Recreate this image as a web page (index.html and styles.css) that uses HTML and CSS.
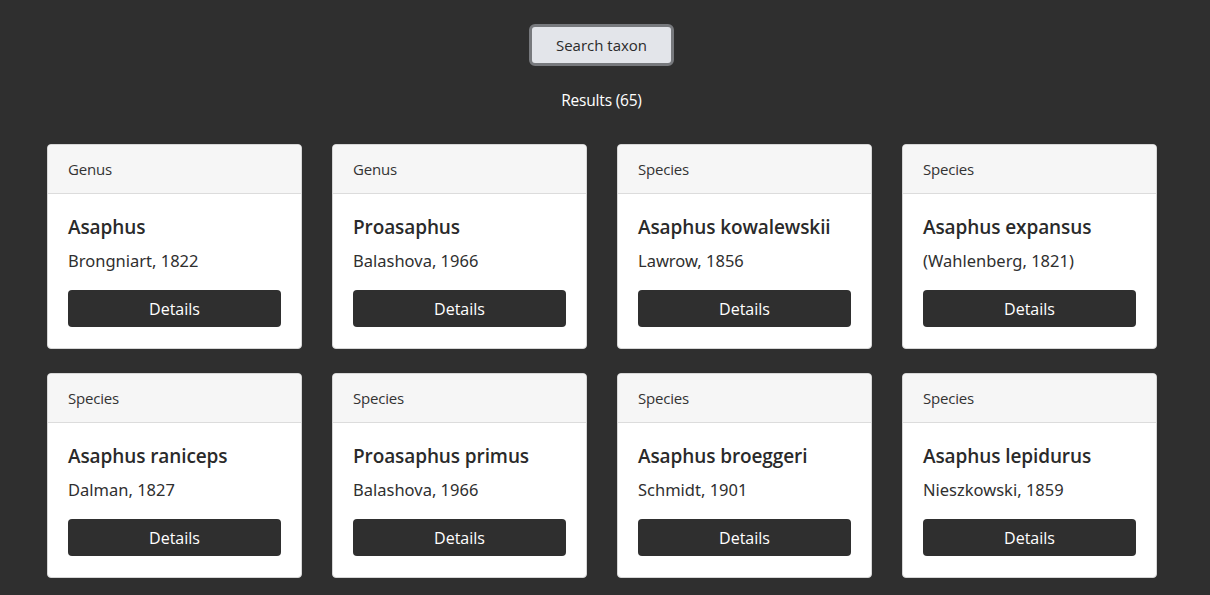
FILE: index.html
```html
<!DOCTYPE html>
<html lang="en">
<head>
<meta charset="utf-8">
<title>Search taxon</title>
<link rel="stylesheet" href="styles.css">
</head>
<body>
<main class="page">
  <div class="search-row">
    <button class="search-btn" type="button">Search taxon</button>
  </div>
  <p class="results">Results (65)</p>
  <div class="grid">
    <div class="card"><div class="card-header">Genus</div><div class="card-body"><h5 class="title">Asaphus</h5><p class="author">Brongniart, 1822</p><button class="details" type="button">Details</button></div></div>
    <div class="card"><div class="card-header">Genus</div><div class="card-body"><h5 class="title">Proasaphus</h5><p class="author">Balashova, 1966</p><button class="details" type="button">Details</button></div></div>
    <div class="card"><div class="card-header">Species</div><div class="card-body"><h5 class="title">Asaphus kowalewskii</h5><p class="author">Lawrow, 1856</p><button class="details" type="button">Details</button></div></div>
    <div class="card"><div class="card-header">Species</div><div class="card-body"><h5 class="title">Asaphus expansus</h5><p class="author">(Wahlenberg, 1821)</p><button class="details" type="button">Details</button></div></div>
    <div class="card"><div class="card-header">Species</div><div class="card-body"><h5 class="title">Asaphus raniceps</h5><p class="author">Dalman, 1827</p><button class="details" type="button">Details</button></div></div>
    <div class="card"><div class="card-header">Species</div><div class="card-body"><h5 class="title">Proasaphus primus</h5><p class="author">Balashova, 1966</p><button class="details" type="button">Details</button></div></div>
    <div class="card"><div class="card-header">Species</div><div class="card-body"><h5 class="title">Asaphus broeggeri</h5><p class="author">Schmidt, 1901</p><button class="details" type="button">Details</button></div></div>
    <div class="card"><div class="card-header">Species</div><div class="card-body"><h5 class="title">Asaphus lepidurus</h5><p class="author">Nieszkowski, 1859</p><button class="details" type="button">Details</button></div></div>
  </div>
</main>
</body>
</html>
```

FILE: styles.css
```css
* { box-sizing: border-box; }
html, body {
  margin: 0;
  background: #2f2f2f;
}
body {
  font-family: "Open Sans", "Noto Sans", sans-serif;
  color: #212529;
  overflow: hidden;
}
.page {
  width: 1203px;
  padding: 24px 47px 0 47px;
}
.search-row {
  display: flex;
  justify-content: center;
}
.search-btn {
  width: 145px;
  height: 42px;
  background: #e3e5ea;
  border: 3px solid #77797d;
  border-radius: 6px;
  font-family: "Open Sans", "Noto Sans", sans-serif;
  font-size: 15px;
  color: #2b2b2b;
  padding: 0;
}
.results {
  margin: 24px 0 0 0;
  text-align: center;
  color: #ffffff;
  font-size: 15.5px;
  line-height: 20px;
  letter-spacing: -0.2px;
}
.grid {
  margin-top: 34px;
  display: grid;
  grid-template-columns: repeat(4, 255px);
  column-gap: 30px;
  row-gap: 24px;
}
.card {
  background: #ffffff;
  border: 1px solid #d6d6d6;
  border-radius: 4px;
  height: 205px;
  overflow: hidden;
}
.card-header {
  height: 49px;
  background: #f6f6f6;
  border-bottom: 1px solid #dcdcdc;
  padding: 0 20px;
  display: flex;
  align-items: center;
  font-size: 15px;
  color: #333;
  letter-spacing: -0.2px;
}
.card-body {
  padding: 20px 20px 0 20px;
}
.title {
  margin: 0;
  font-size: 19px;
  font-weight: 600;
  line-height: 26px;
  color: #2a2a2a;
  letter-spacing: -0.1px;
}
.author {
  margin: 10px 0 0 0;
  font-family: "Noto Sans", "Open Sans", sans-serif;
  font-size: 16.5px;
  line-height: 22px;
  color: #2f2f2f;
}
.details {
  margin-top: 18px;
  width: 213px;
  height: 37px;
  background: #2f2f2f;
  color: #ffffff;
  border: 0;
  border-radius: 4px;
  font-family: "Open Sans", "Noto Sans", sans-serif;
  font-size: 16px;
  padding: 0;
  display: block;
}
```
